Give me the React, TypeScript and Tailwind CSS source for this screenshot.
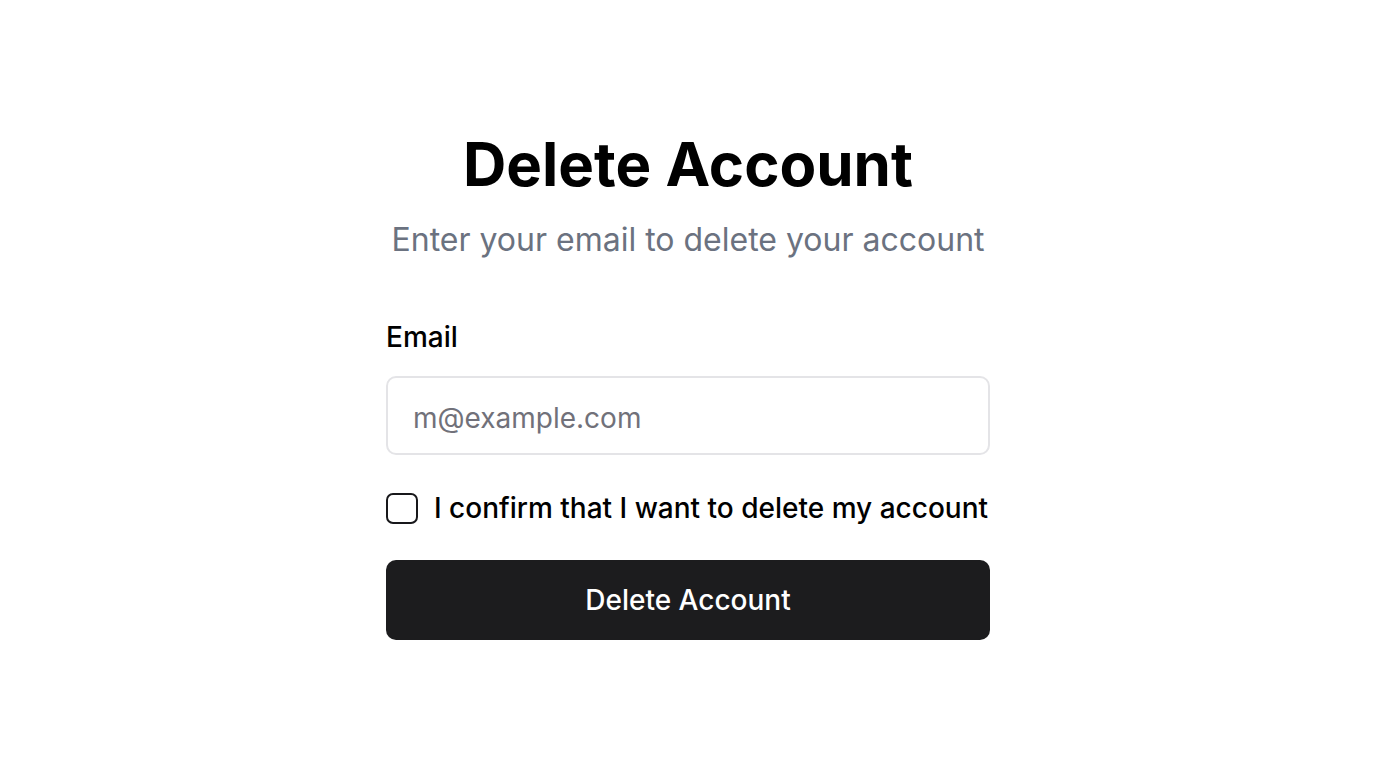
export default function App() {
  return (
    <div
      className="min-h-screen w-full bg-white flex items-center justify-center"
      style={{ fontFamily: "Inter, 'Noto Sans', sans-serif" }}
    >
      <div className="w-[604px] flex flex-col">
        {/* Header */}
        <div className="flex flex-col items-center">
          <h1 className="text-[60px] leading-[72px] font-bold text-black">
            Delete Account
          </h1>
          <p className="mt-[20px] text-[32px] leading-[40px] text-[#6b7280]">
            Enter your email to delete your account
          </p>
        </div>

        {/* Email */}
        <label className="mt-[59px] text-[28px] leading-[36px] font-medium text-black">
          Email
        </label>
        <input
          type="email"
          placeholder="m@example.com"
          className="mt-[21px] h-[79px] w-full rounded-[10px] border-2 border-[#e4e4e7] pl-[25px] pr-[25px] pt-[5px] text-[28px] text-black placeholder:text-[#71717a] outline-none"
        />

        {/* Confirm */}
        <div className="mt-[35px] flex items-center gap-[16px]">
          <div className="h-[31px] w-[32px] shrink-0 rounded-[7px] border-2 border-[#18181b]" />
          <span className="text-[28px] leading-[36px] font-medium text-black">
            I confirm that I want to delete my account
          </span>
        </div>

        {/* Button */}
        <button className="mt-[34px] h-[80px] w-full rounded-[10px] bg-[#1c1c1e] text-[28px] font-medium text-white">
          Delete Account
        </button>
      </div>
    </div>
  );
}
